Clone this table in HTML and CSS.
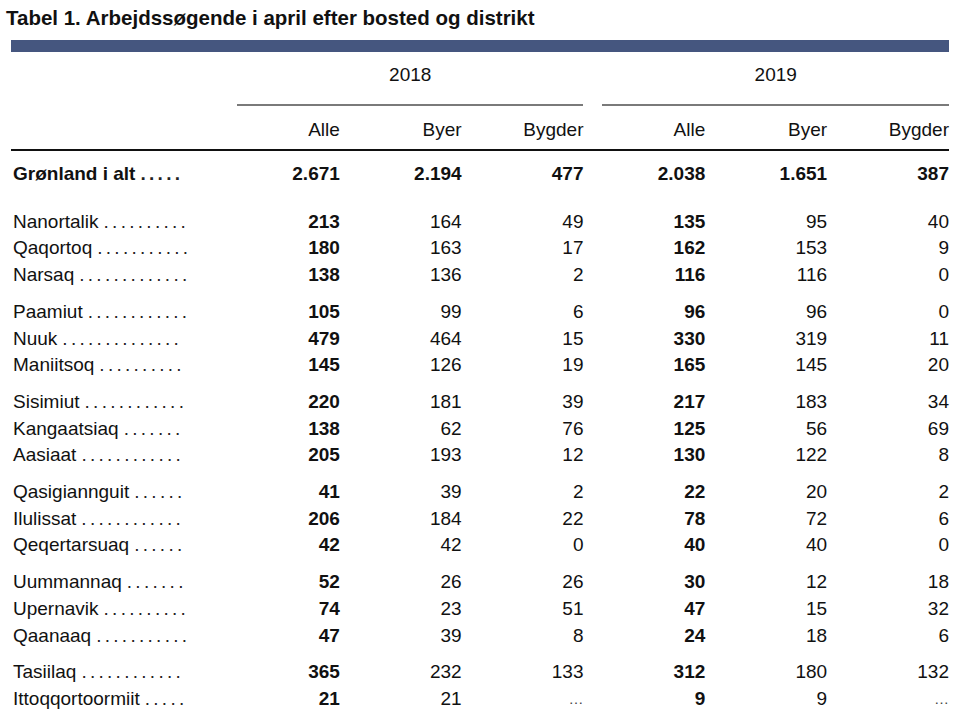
FILE: index.html
```html
<!DOCTYPE html>
<html lang="da">
<head>
<meta charset="utf-8">
<title>Tabel 1</title>
<link rel="stylesheet" href="styles.css">
</head>
<body>
<h1 class="title">Tabel 1. Arbejdssøgende i april efter bosted og distrikt</h1>
<div class="bar"></div>
<table class="stats">
  <colgroup>
    <col class="c-label">
    <col class="c-num"><col class="c-num"><col class="c-num">
    <col class="c-num"><col class="c-num"><col class="c-num">
  </colgroup>
  <thead>
    <tr class="years">
      <th></th>
      <th colspan="3" class="yearcell"><div class="year">2018</div></th>
      <th colspan="3" class="yearcell"><div class="year">2019</div></th>
    </tr>
    <tr class="heads">
      <th></th>
      <th>Alle</th><th>Byer</th><th>Bygder</th>
      <th>Alle</th><th>Byer</th><th>Bygder</th>
    </tr>
  </thead>
  <tbody class="total">
    <tr><td><div class="lab"><span class="name">Grønland i alt</span><span class="dots">. . . . .</span></div></td><td>2.671</td><td>2.194</td><td>477</td><td>2.038</td><td>1.651</td><td>387</td></tr>
  </tbody>
  <tbody class="group first">
    <tr><td><div class="lab"><span class="name">Nanortalik</span><span class="dots">. . . . . . . . . .</span></div></td><td class="b">213</td><td>164</td><td>49</td><td class="b">135</td><td>95</td><td>40</td></tr>
    <tr><td><div class="lab"><span class="name">Qaqortoq</span><span class="dots">. . . . . . . . . . .</span></div></td><td class="b">180</td><td>163</td><td>17</td><td class="b">162</td><td>153</td><td>9</td></tr>
    <tr><td><div class="lab"><span class="name">Narsaq</span><span class="dots">. . . . . . . . . . . . .</span></div></td><td class="b">138</td><td>136</td><td>2</td><td class="b">116</td><td>116</td><td>0</td></tr>
  </tbody>
  <tbody class="group">
    <tr><td><div class="lab"><span class="name">Paamiut</span><span class="dots">. . . . . . . . . . . .</span></div></td><td class="b">105</td><td>99</td><td>6</td><td class="b">96</td><td>96</td><td>0</td></tr>
    <tr><td><div class="lab"><span class="name">Nuuk</span><span class="dots">. . . . . . . . . . . . . .</span></div></td><td class="b">479</td><td>464</td><td>15</td><td class="b">330</td><td>319</td><td>11</td></tr>
    <tr><td><div class="lab"><span class="name">Maniitsoq</span><span class="dots">. . . . . . . . . .</span></div></td><td class="b">145</td><td>126</td><td>19</td><td class="b">165</td><td>145</td><td>20</td></tr>
  </tbody>
  <tbody class="group">
    <tr><td><div class="lab"><span class="name">Sisimiut</span><span class="dots">. . . . . . . . . . . .</span></div></td><td class="b">220</td><td>181</td><td>39</td><td class="b">217</td><td>183</td><td>34</td></tr>
    <tr><td><div class="lab"><span class="name">Kangaatsiaq</span><span class="dots">. . . . . . .</span></div></td><td class="b">138</td><td>62</td><td>76</td><td class="b">125</td><td>56</td><td>69</td></tr>
    <tr><td><div class="lab"><span class="name">Aasiaat</span><span class="dots">. . . . . . . . . . . .</span></div></td><td class="b">205</td><td>193</td><td>12</td><td class="b">130</td><td>122</td><td>8</td></tr>
  </tbody>
  <tbody class="group">
    <tr><td><div class="lab"><span class="name">Qasigiannguit</span><span class="dots">. . . . . .</span></div></td><td class="b">41</td><td>39</td><td>2</td><td class="b">22</td><td>20</td><td>2</td></tr>
    <tr><td><div class="lab"><span class="name">Ilulissat</span><span class="dots">. . . . . . . . . . . .</span></div></td><td class="b">206</td><td>184</td><td>22</td><td class="b">78</td><td>72</td><td>6</td></tr>
    <tr><td><div class="lab"><span class="name">Qeqertarsuaq</span><span class="dots">. . . . . .</span></div></td><td class="b">42</td><td>42</td><td>0</td><td class="b">40</td><td>40</td><td>0</td></tr>
  </tbody>
  <tbody class="group">
    <tr><td><div class="lab"><span class="name">Uummannaq</span><span class="dots">. . . . . . .</span></div></td><td class="b">52</td><td>26</td><td>26</td><td class="b">30</td><td>12</td><td>18</td></tr>
    <tr><td><div class="lab"><span class="name">Upernavik</span><span class="dots">. . . . . . . . . .</span></div></td><td class="b">74</td><td>23</td><td>51</td><td class="b">47</td><td>15</td><td>32</td></tr>
    <tr><td><div class="lab"><span class="name">Qaanaaq</span><span class="dots">. . . . . . . . . . .</span></div></td><td class="b">47</td><td>39</td><td>8</td><td class="b">24</td><td>18</td><td>6</td></tr>
  </tbody>
  <tbody class="group">
    <tr><td><div class="lab"><span class="name">Tasiilaq</span><span class="dots">. . . . . . . . . . . .</span></div></td><td class="b">365</td><td>232</td><td>133</td><td class="b">312</td><td>180</td><td>132</td></tr>
    <tr><td><div class="lab"><span class="name">Ittoqqortoormiit</span><span class="dots">. . . . .</span></div></td><td class="b">21</td><td>21</td><td class="na">…</td><td class="b">9</td><td>9</td><td class="na">…</td></tr>
  </tbody>
</table>
</body>
</html>
```

FILE: styles.css
```css
html, body {
  margin: 0;
  padding: 0;
  background: #fff;
}

body {
  font-family: "Liberation Sans", Arial, sans-serif;
  color: #111;
}

.title {
  margin: 0 0 7px 0;
  padding: 3px 0 0 6px;
  font-size: 20.5px;
  line-height: 30px;
  font-weight: bold;
  color: #111;
}

.bar {
  margin-left: 11px;
  width: 938px;
  height: 12px;
  background: #45567f;
}

.stats {
  margin-left: 11px;
  width: 938px;
  border-collapse: collapse;
  border-spacing: 0;
  table-layout: fixed;
  font-size: 19px;
}

.c-label { width: 207px; }
.c-num { width: 121.8px; }

.stats th {
  font-weight: normal;
  padding: 0;
  text-align: right;
}

.stats th.yearcell {
  padding-left: 19px;
}

.year {
  text-align: center;
  padding: 12px 0 18px 0;
  line-height: 22px;
  border-bottom: 2px solid #7a7a7a;
}

.heads th {
  padding: 13px 0 8px 0;
  line-height: 22px;
  border-bottom: 2px solid #111;
}

.stats td {
  padding: 0;
  line-height: 26.7px;
  text-align: right;
  white-space: nowrap;
}

.stats td:first-child {
  padding-left: 2px;
  text-align: left;
}

.total td {
  font-weight: bold;
  padding-top: 10px;
}

.group tr:first-child td {
  padding-top: 10px;
}

.group.first tr:first-child td {
  padding-top: 21px;
}

.b {
  font-weight: bold;
}

.na {
  font-size: 15px;
  color: #444;
}

.lab {
  display: flex;
  align-items: baseline;
}

.name {
  flex: none;
}

.dots {
  flex: none;
  margin-left: 5px;
  white-space: nowrap;
  word-spacing: -2px;
  color: #222;
}
```
